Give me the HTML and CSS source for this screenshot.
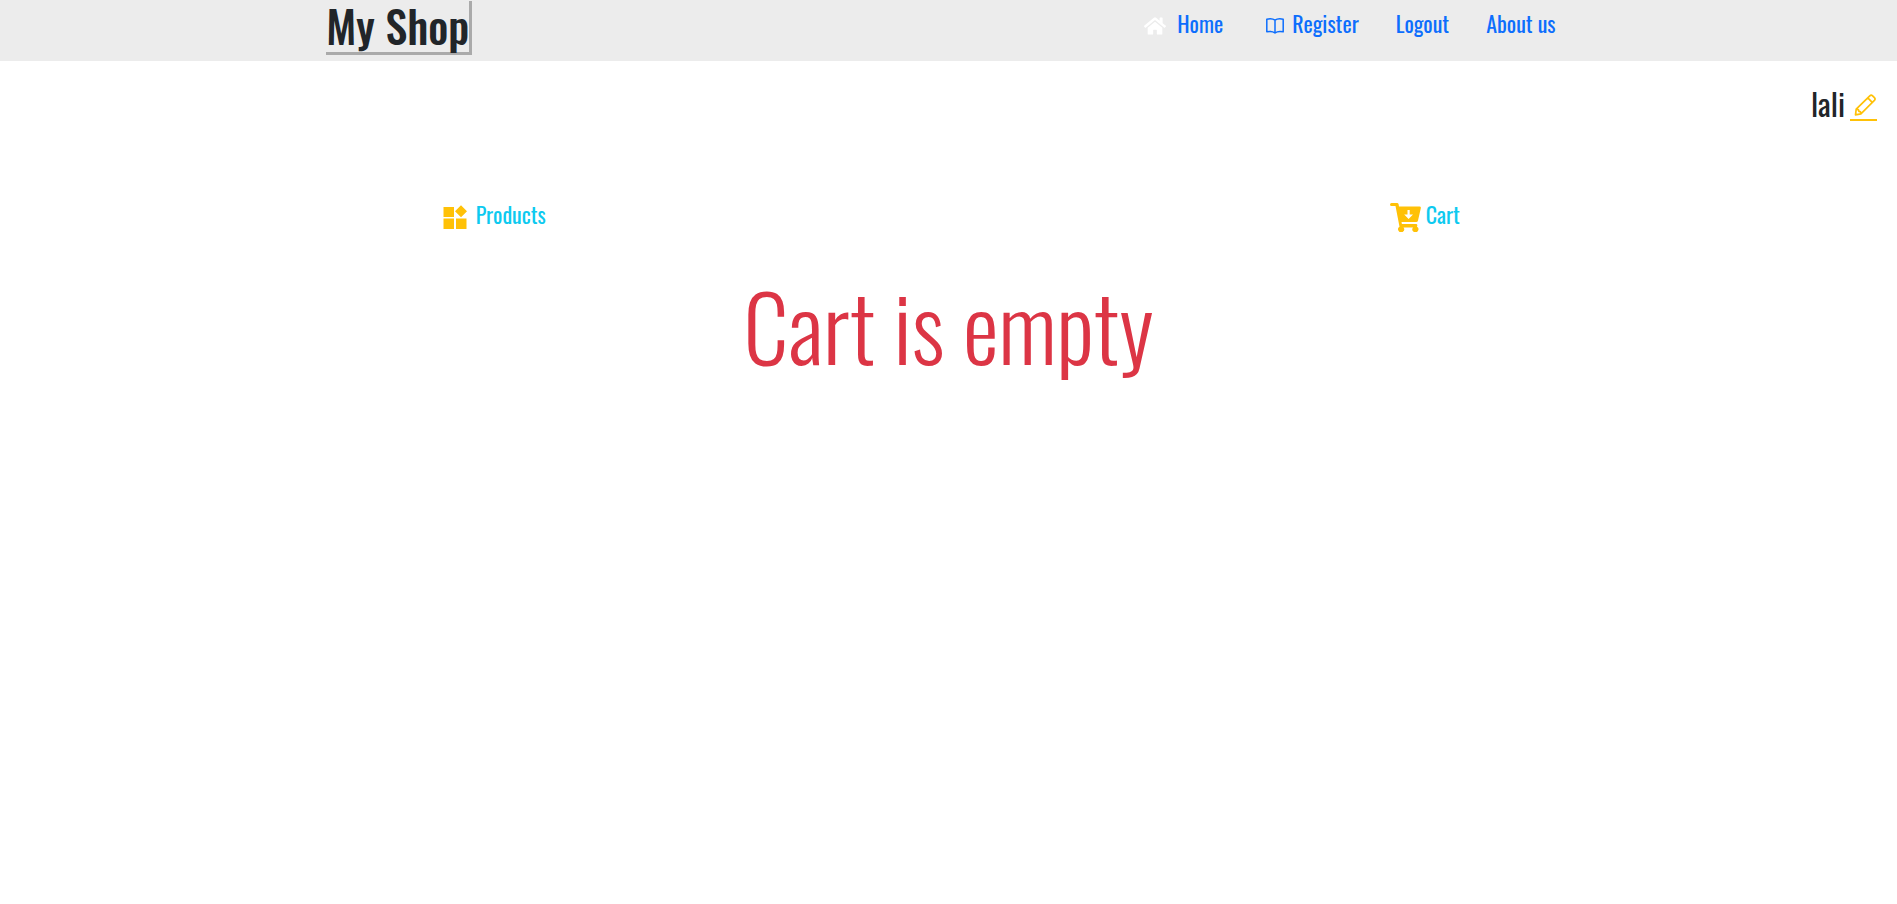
FILE: index.html
```html
<!DOCTYPE html>
<html lang="en">
<head>
<meta charset="utf-8">
<meta name="viewport" content="width=device-width, initial-scale=1">
<title>My Shop</title>
<link rel="stylesheet" href="styles.css">
</head>
<body>
<header class="header">
  <h1 class="brand">My Shop</h1>
  <nav class="nav">
    <a class="nav-link home" href="#">
      <svg class="icon-home" viewBox="0 0 576 512" fill="#fff" aria-hidden="true"><path d="M280 148 96 300v164a16 16 0 0 0 16 16h112a16 16 0 0 0 16-16v-96a16 16 0 0 1 16-16h64a16 16 0 0 1 16 16v96a16 16 0 0 0 16 16h112a16 16 0 0 0 16-16V300L296 148a12 12 0 0 0-16 0zM572 251l-84-69V44a12 12 0 0 0-12-12h-56a12 12 0 0 0-12 12v72l-89-74a48 48 0 0 0-61 0L4 251a12 12 0 0 0-1 17l25 31a12 12 0 0 0 17 2L280 107a12 12 0 0 1 16 0l235 194a12 12 0 0 0 17-2l25-31a12 12 0 0 0-1-17z"/></svg>
      Home</a>
    <a class="nav-link" href="#">
      <svg class="icon-book" viewBox="0 0 18 18" fill="none" stroke="#0d6efd" stroke-width="1.5" stroke-linejoin="round" aria-hidden="true"><path d="M9 3.200C7 1.700 3.500 1.600.8 2.200V14.800C3.500 14.200 7 14.400 9 16C11 14.400 14.500 14.200 17.200 14.800V2.200C14.500 1.600 11 1.700 9 3.200zV16"/></svg>
      Register</a>
    <a class="nav-link" href="#">Logout</a>
    <a class="nav-link" href="#">About us</a>
  </nav>
</header>
<main>
  <div class="user">
    <span>lali</span>
    <a class="edit" href="#" aria-label="Edit name">
      <svg class="icon-pencil" viewBox="0 0 22 22" fill="none" stroke="#ffc107" stroke-width="1.700" stroke-linejoin="round" stroke-linecap="round" aria-hidden="true"><path d="M1.500 20.800 2.200 15.200 15.800 1.800Q17.200.500 18.600 1.800L20.400 3.600Q21.700 5 20.400 6.400L6.900 19.800zM13.800 3.900 18.200 8.400M2.200 15.200Q5 15.200 4.800 17.300Q7 17.200 6.900 19.800"/></svg>
    </a>
  </div>
  <nav class="tabs">
    <a class="tab products" href="#">
      <svg class="icon-widgets" viewBox="0 0 24 24" fill="#ffc107" aria-hidden="true"><path d="M.5 2H11v10H.5zM.5 13.500H11V24H.5zM13 13.500h10.500V24H13zM18 .2l6 6-6 6-6-6z"/></svg>
      Products</a>
    <a class="tab cart" href="#">
      <svg class="icon-cart" viewBox="0 0 31 29" aria-hidden="true"><path fill="#ffc107" d="M1.500 0H7q1.300 0 1.600 1.200L9 3.500H29.500q1.700 0 1.300 1.800L28 17.500q-.3 1.500-1.800 1.500H11.500l.4 2H26q1.600 0 1.300 1.600l-.3 1.200a3 3 0 1 1-4 .7H13.500A3 3 0 1 1 9.500 23.800L5.500 3H1.500a1.500 1.500 0 0 1 0-3z"/><path fill="#fff" d="M17.500 7h2.200v4.500H23l-4.400 4.500-4.400-4.500h3.300z"/></svg>
      Cart</a>
  </nav>
  <h2 class="empty">Cart is empty</h2>
</main>
</body>
</html>
```
FILE: styles.css
```css
* { box-sizing: border-box; }
body {
  margin: 0;
  background: #fff;
  color: #212529;
  font-family: Oswald, "Liberation Sans Narrow", "Roboto Condensed", "Open Sans Condensed", "Liberation Sans", sans-serif;
}
a { text-decoration: none; }
svg { display: block; flex: none; }
.header {
  display: flex;
  justify-content: space-between;
  align-items: flex-start;
  min-height: 61px;
  padding: 1px 18% 0 17.2%;
  background: #ececec;
}
.brand {
  margin: 0;
  padding-bottom: 2px;
  border-right: 3px solid #aaa;
  border-bottom: 3px solid #aaa;
  font-size: 44px;
  font-weight: 500;
  line-height: 49px;
  white-space: nowrap;
}
.nav {
  display: flex;
  gap: 37px;
  padding-top: 6px;
}
.nav-link {
  display: flex;
  align-items: center;
  gap: 8px;
  color: #0d6efd;
  font-size: 22px;
  line-height: 32px;
  white-space: nowrap;
}
.nav-link svg, .tab svg { margin-top: 6px; }
.home { gap: 11px; margin-right: 6px; }
.icon-home { width: 22px; height: 20px; }
.icon-book { width: 18px; height: 18px; }
.user {
  display: flex;
  justify-content: flex-end;
  align-items: center;
  gap: 5px;
  padding: 20px 20px 0 0;
  font-size: 31px;
  line-height: 44px;
}
.edit {
  margin-top: 6px;
  padding: 2px 1px 3px 4px;
  border-bottom: 2px solid #ffc107;
}
.icon-pencil { width: 22px; height: 22px; }
.tabs {
  display: grid;
  grid-template-columns: 1fr 1fr;
  margin-top: 71px;
}
.tab {
  display: flex;
  justify-content: center;
  align-items: center;
  gap: 5px;
  color: #0dcaf0;
  font-size: 22px;
  line-height: 36px;
}
.products { gap: 9px; padding-left: 40px; }
.cart { padding-left: 4px; }
.icon-widgets { width: 24px; height: 24px; }
.icon-cart { width: 31px; height: 29px; }
.empty {
  margin: 38px 0 0;
  color: #dc3545;
  font-size: 90px;
  font-weight: 300;
  line-height: 110px;
  text-align: center;
}
```
